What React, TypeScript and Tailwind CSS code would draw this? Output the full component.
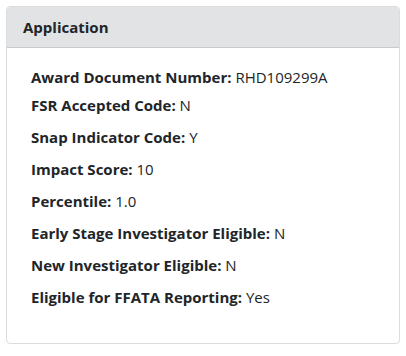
export default function App() {
  const rows: [string, string][] = [
    ["Award Document Number:", "RHD109299A"],
    ["FSR Accepted Code:", "N"],
    ["Snap Indicator Code:", "Y"],
    ["Impact Score:", "10"],
    ["Percentile:", "1.0"],
    ["Early Stage Investigator Eligible:", "N"],
    ["New Investigator Eligible:", "N"],
    ["Eligible for FFATA Reporting:", "Yes"],
  ];
  return (
    <div className="w-[406px] h-[356px] bg-white p-[6px] text-[#212529]" style={{ fontFamily: '"Open Sans", "Noto Sans", sans-serif' }}>
      <div className="w-[394px] h-[338px] border border-[#dcdcdc] rounded-[4px] overflow-hidden flex flex-col">
        <div className="h-[41px] bg-[#e2e3e5] border-b border-[#c9cacc] flex items-center pl-[16px]">
          <span className="font-bold text-[15px] leading-[24px]">Application</span>
        </div>
        <div className="pl-[24px] pt-[17px] flex flex-col">
          {rows.map(([k, v], i) => (
            <div key={k} className={`text-[15px] leading-[24px] whitespace-nowrap ${i === 0 ? "" : i === 1 ? "mt-[4px]" : "mt-[8px]"}`}>
              <span className="font-bold">{k}</span> <span>{v}</span>
            </div>
          ))}
        </div>
      </div>
    </div>
  );
}
